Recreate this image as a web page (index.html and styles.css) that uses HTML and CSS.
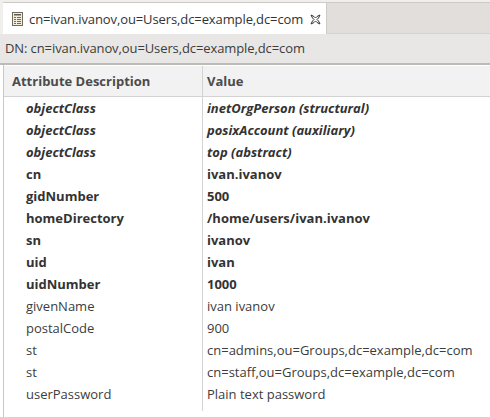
FILE: index.html
```html
<!DOCTYPE html>
<html>
<head>
<meta charset="utf-8">
<link rel="stylesheet" href="styles.css">
</head>
<body>
<div class="tabbar">
  <div class="tab">
    <svg class="tab-icon" width="12" height="14" viewBox="0 0 12 14">
      <rect x="0.5" y="0.5" width="10" height="13" fill="#f4efdc" stroke="#6f6a5c"/>
      <rect x="2" y="2" width="7" height="1.5" fill="#5d5a50"/>
      <g fill="#6f6a5c">
        <rect x="2" y="5" width="2" height="1"/><rect x="5" y="5" width="4" height="1"/>
        <rect x="2" y="7" width="2" height="1"/><rect x="5" y="7" width="4" height="1"/>
        <rect x="2" y="9" width="2" height="1"/><rect x="5" y="9" width="4" height="1"/>
        <rect x="2" y="11" width="2" height="1"/><rect x="5" y="11" width="4" height="1"/>
      </g>
    </svg>
    <span class="tab-title">cn=ivan.ivanov,ou=Users,dc=example,dc=com</span>
    <svg class="tab-close" width="11" height="11" viewBox="0 0 11 11">
      <path d="M1 1 L4 2.5 L5.5 4 L7 2.5 L10 1 L8.5 4 L7 5.5 L8.5 7 L10 10 L7 8.5 L5.5 7 L4 8.5 L1 10 L2.5 7 L4 5.5 L2.5 4 Z" fill="#fff" stroke="#333" stroke-width="1" stroke-linejoin="miter"/>
    </svg>
  </div>
  <div class="tab-fill"></div>
</div>
<div class="dnbar">DN: cn=ivan.ivanov,ou=Users,dc=example,dc=com</div>
<div class="table">
  <div class="thead">
    <div class="th col-attr">Attribute Description</div>
    <div class="th col-val">Value</div>
  </div>
  <div class="tbody">
    <div class="row oc"><div class="td col-attr">objectClass</div><div class="td col-val">inetOrgPerson (structural)</div></div>
    <div class="row oc"><div class="td col-attr">objectClass</div><div class="td col-val">posixAccount (auxiliary)</div></div>
    <div class="row oc"><div class="td col-attr">objectClass</div><div class="td col-val">top (abstract)</div></div>
    <div class="row must"><div class="td col-attr">cn</div><div class="td col-val">ivan.ivanov</div></div>
    <div class="row must"><div class="td col-attr">gidNumber</div><div class="td col-val">500</div></div>
    <div class="row must"><div class="td col-attr">homeDirectory</div><div class="td col-val">/home/users/ivan.ivanov</div></div>
    <div class="row must"><div class="td col-attr">sn</div><div class="td col-val">ivanov</div></div>
    <div class="row must"><div class="td col-attr">uid</div><div class="td col-val">ivan</div></div>
    <div class="row must"><div class="td col-attr">uidNumber</div><div class="td col-val">1000</div></div>
    <div class="row"><div class="td col-attr">givenName</div><div class="td col-val">ivan ivanov</div></div>
    <div class="row"><div class="td col-attr">postalCode</div><div class="td col-val">900</div></div>
    <div class="row"><div class="td col-attr">st</div><div class="td col-val">cn=admins,ou=Groups,dc=example,dc=com</div></div>
    <div class="row"><div class="td col-attr">st</div><div class="td col-val">cn=staff,ou=Groups,dc=example,dc=com</div></div>
    <div class="row"><div class="td col-attr">userPassword</div><div class="td col-val">Plain text password</div></div>
  </div>
</div>
</body>
</html>
```
FILE: styles.css
```css
html, body {
  margin: 0;
  padding: 0;
  background: #ffffff;
  width: 490px;
  height: 417px;
  overflow: hidden;
  font-family: "Open Sans", "DejaVu Sans", sans-serif;
  font-size: 13px;
  color: #3c3c3c;
}

.tabbar {
  display: flex;
  height: 34px;
  box-sizing: border-box;
  border-top: 2px solid #f0efed;
  background: #f0efed;
}

.tab {
  display: flex;
  align-items: center;
  width: 323px;
  margin-left: 3px;
  box-sizing: border-box;
  background: #ffffff;
  border-top: 1px solid #cdc9c4;
  padding-left: 9px;
  padding-top: 1px;
}

.tab-icon {
  flex: none;
  margin-right: 5px;
}

.tab-title {
  color: #333333;
  white-space: nowrap;
  letter-spacing: -0.1px;
}

.tab-close {
  flex: none;
  margin-left: 7px;
}

.tab-fill {
  flex: 1;
  background: #e1dedb;
  border-top: 1px solid #cdc9c4;
  border-left: 1px solid #cdc9c4;
  border-bottom: 1px solid #d6d3cf;
}

.dnbar {
  height: 31px;
  line-height: 29px;
  box-sizing: border-box;
  padding-left: 5px;
  background: #e8e7e5;
  border-bottom: 2px solid #bdbbb8;
  color: #3c3c3c;
  white-space: nowrap;
  letter-spacing: -0.1px;
}

.table {
  margin-left: 3px;
  border-left: 1px solid #c9c9c9;
  height: 352px;
  display: flex;
  flex-direction: column;
}

.thead {
  display: flex;
  height: 32px;
  box-sizing: border-box;
  background: #f2f2f2;
  border-top: 1px solid #ffffff;
  border-bottom: 1px solid #d3d3d3;
}

.th {
  font-weight: bold;
  color: #4b4b4b;
  line-height: 31px;
}

.col-attr {
  width: 199px;
  flex: none;
  box-sizing: border-box;
  padding-left: 8px;
  border-right: 1px solid #d3d3d3;
}

.col-val {
  flex: 1;
  padding-left: 4px;
  white-space: nowrap;
}

.tbody {
  flex: 1;
  display: flex;
  flex-direction: column;
}

.tbody::after {
  content: "";
  display: block;
  width: 199px;
  height: 6px;
  box-sizing: border-box;
  border-right: 1px solid #d3d3d3;
}

.row {
  display: flex;
  height: 22px;
  line-height: 22px;
}

.row .col-attr {
  padding-left: 22px;
}

.row.must .td {
  font-weight: bold;
  color: #333333;
}

.row.oc .td {
  font-weight: bold;
  font-style: italic;
  color: #333333;
}
```
